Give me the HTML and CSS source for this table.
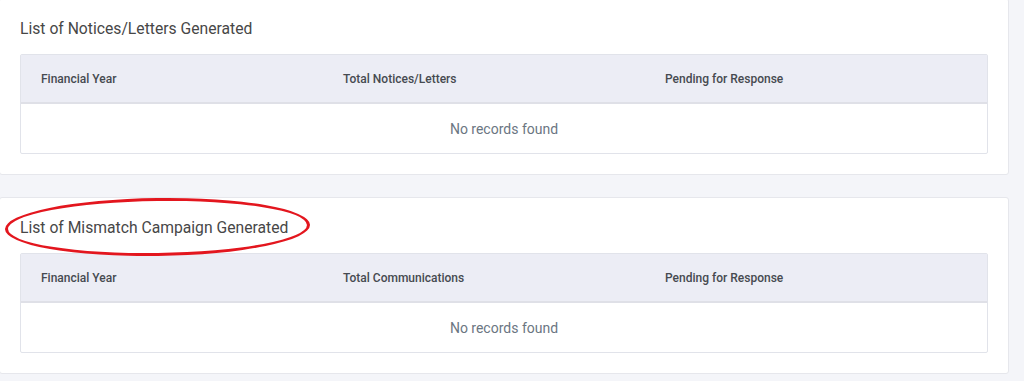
FILE: index.html
```html
<!DOCTYPE html>
<html lang="en">
<head>
  <meta charset="UTF-8" />
  <meta name="viewport" content="width=device-width, initial-scale=1.0"/>
  <title>Notices and Campaigns</title>
  <link rel="stylesheet" href="styles.css">
</head>
<body>

<div class="page">
  <!-- Notices / Letters -->
  <div class="card first">
    <h3 class="card-title">List of Notices/Letters Generated</h3>
    <div class="grid-table">
      <div class="head-row">
        <div class="cell">Financial Year</div>
        <div class="cell">Total Notices/Letters</div>
        <div class="cell">Pending for Response</div>
      </div>
      <div class="empty-row">No records found</div>
    </div>
  </div>

  <!-- Mismatch Campaign -->
  <div class="card">
    <h3 class="card-title">List of Mismatch Campaign Generated</h3>
    <div class="marker"></div>
    <div class="grid-table">
      <div class="head-row">
        <div class="cell">Financial Year</div>
        <div class="cell">Total Communications</div>
        <div class="cell">Pending for Response</div>
      </div>
      <div class="empty-row">No records found</div>
    </div>
  </div>
</div>

</body>
</html>
```

FILE: styles.css
```css
* {
  margin: 0;
  padding: 0;
  box-sizing: border-box;
}

body {
  font-family: Roboto, "Noto Sans", sans-serif;
  background: #f4f5f9;
  color: #4a4a4a;
  height: 381px;
  overflow: hidden;
}

.page {
  display: flex;
  flex-direction: column;
  gap: 22px;
  margin: -2px 15px 0 -1px;
}

.card {
  position: relative;
  background: #fff;
  border: 1px solid #e6e7ec;
  border-radius: 3px;
  padding: 19px 20px 20px 20px;
}

.card-title {
  font-size: 15.7px;
  font-weight: 400;
  color: #474747;
  line-height: 22px;
  margin-bottom: 14px;
}

.grid-table {
  border: 1px solid #e1e3ea;
  border-radius: 2px;
}

.head-row {
  display: grid;
  grid-template-columns: 302px 322px 1fr;
  height: 49px;
  align-items: center;
  background: #ecedf5;
  border-bottom: 2px solid #dfe0e7;
}

.head-row .cell {
  padding-left: 20px;
  font-size: 12px;
  font-weight: 500;
  color: #464a50;
}

.empty-row {
  height: 49px;
  display: flex;
  align-items: center;
  justify-content: center;
  font-size: 14px;
  color: #6b7682;
}

.marker {
  position: absolute;
  left: 5px;
  top: 0px;
  width: 305px;
  height: 58px;
  border: 3.5px solid #e3161e;
  border-radius: 50%;
  transform: rotate(-0.8deg);
}
```
